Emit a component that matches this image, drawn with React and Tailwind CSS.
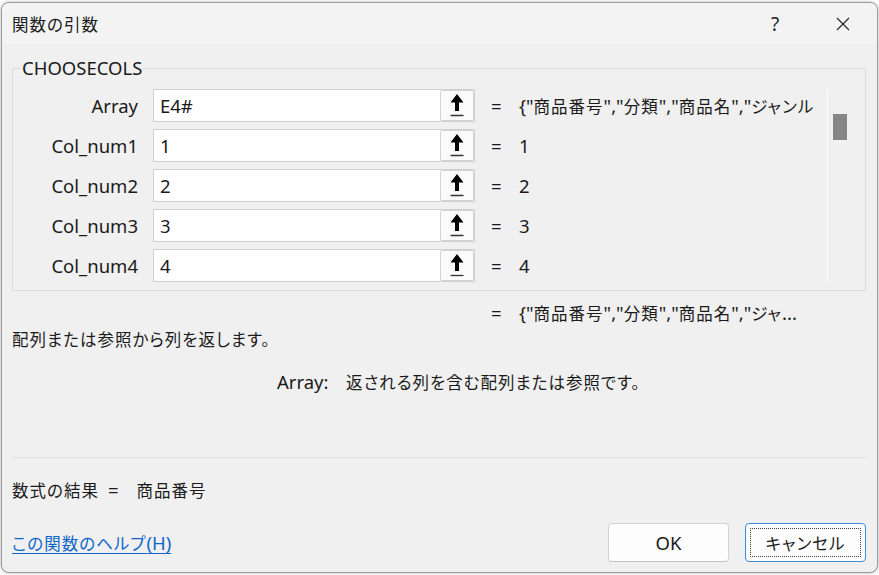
import React from 'react';

const CJK = /([\u3000-\u30ff\u3400-\u9fff\uff00-\uffef]+)/;

// Latin runs stay in the UI face, Japanese runs get the CJK face with proportional kana
const T = ({ children }) => (
  <>
    {String(children).split(CJK).map((part, i) =>
      i % 2 === 1 ? (
        <span key={i} className="font-['Noto_Sans_CJK_JP',sans-serif] text-[16.5px] tracking-[1px] [font-feature-settings:'palt']">{part}</span>
      ) : (
        part && <span key={i}>{part}</span>
      )
    )}
  </>
);

const RefArrow = () => (
  <svg width="14" height="23" viewBox="0 0 14 23">
    <polygon points="7,0 13.5,8.5 9,8.5 9,17 5,17 5,8.5 0.5,8.5" fill="#000" />
    <line x1="0.5" y1="21.5" x2="13.5" y2="21.5" stroke="#333" strokeWidth="1.3" />
  </svg>
);

const args = [
  { name: 'Array', input: 'E4#', value: '{"商品番号","分類","商品名","ジャンル' },
  { name: 'Col_num1', input: '1', value: '1' },
  { name: 'Col_num2', input: '2', value: '2' },
  { name: 'Col_num3', input: '3', value: '3' },
  { name: 'Col_num4', input: '4', value: '4' },
];

export default function App() {
  return (
    <div className="w-[879px] h-[575px] bg-white pt-[2px] pl-[1px] overflow-hidden font-['Noto_Sans','Noto_Sans_CJK_JP',sans-serif] text-[#1a1a1a] text-[18.5px] leading-[24px]">
      <div className="w-[877px] h-[571px] rounded-[8px] border border-[#9b9b9b] bg-[#f0f0f0] flex flex-col overflow-hidden shadow-[0_0_3px_rgba(0,0,0,0.35)]">
        {/* title bar */}
        <div className="h-[41px] shrink-0 bg-[#f3f3f3] flex items-center">
          <div className="pl-[10px]"><T>関数の引数</T></div>
          <div className="ml-auto flex h-full">
            <div className="w-[68px] flex items-center justify-center text-[19px] text-[#222]">?</div>
            <div className="w-[68px] flex items-center justify-center">
              <svg width="14" height="14" viewBox="0 0 14 14">
                <path d="M1 1 L13 13 M13 1 L1 13" stroke="#222" strokeWidth="1.1" fill="none" />
              </svg>
            </div>
          </div>
        </div>

        {/* body */}
        <div className="flex-1 flex flex-col pl-[10px] pr-[11px] pt-[12px]">
          <fieldset className="border border-[#dcdcdc]">
            <legend className="ml-[8px] px-[1px] leading-[24px]">CHOOSECOLS</legend>
            <div className="flex pt-[9px] pb-[8px]">
              <div className="flex-1 min-w-0 flex flex-col gap-[7px]">
                {args.map((a) => (
                  <div key={a.name} className="flex items-center h-[33px]">
                    <div className="w-[125px] text-right shrink-0">{a.name}</div>
                    <div className="ml-[15px] w-[322px] h-[33px] shrink-0 flex border border-[#cfcfcf] bg-white">
                      <div className="flex-1 pl-[6px] flex items-center">{a.input}</div>
                      <div className="w-[34px] h-full flex items-center justify-center bg-[#fbfbfb] border border-[#d4d4d4] rounded-[2px]">
                        <RefArrow />
                      </div>
                    </div>
                    <span className="ml-[16px] w-[12px] shrink-0">=</span>
                    <div className="ml-[16px] flex-1 min-w-0 overflow-hidden whitespace-nowrap">
                      <T>{a.value}</T>
                    </div>
                  </div>
                ))}
              </div>
              <div className="w-[38px] shrink-0 border-l border-white">
                <div className="ml-[5px] mt-[25px] w-[14px] h-[26px] bg-[#868686]" />
              </div>
            </div>
          </fieldset>

          <div className="mt-[10px] flex pl-[479px] whitespace-nowrap">
            <span className="w-[12px]">=</span>
            <span className="ml-[16px]"><T>{'{"商品番号","分類","商品名","ジャ...'}</T></span>
          </div>

          <div className="mt-[2px]"><T>配列または参照から列を返します。</T></div>

          <div className="mt-[19px] flex pl-[265px]">
            <span className="w-[69px] shrink-0">Array:</span>
            <span><T>返される列を含む配列または参照です。</T></span>
          </div>

          <div className="mt-[63px] border-t border-[#e0e0e0]" />

          <div className="mt-[20px] flex items-center">
            <T>数式の結果</T>
            <span className="ml-[9px]">=</span>
            <span className="ml-[18px]"><T>商品番号</T></span>
          </div>

          <div className="mt-[21px] flex items-center">
            <a className="text-[#0f66c8] underline underline-offset-[3px] cursor-pointer"><T>この関数のヘルプ(H)</T></a>
            <div className="ml-auto flex gap-[16px]">
              <button className="w-[121px] h-[39px] rounded-[4px] bg-[#fdfdfd] border border-[#d3d3d3] border-b-[#c2c2c2]">OK</button>
              <button className="w-[121px] h-[39px] rounded-[4px] bg-[#fdfdfd] border border-[#3d8ad6] p-[4px]">
                <div className="w-full h-full border border-dotted border-[#444] flex items-center justify-center">
                  <T>キャンセル</T>
                </div>
              </button>
            </div>
          </div>
        </div>
      </div>
    </div>
  );
}
